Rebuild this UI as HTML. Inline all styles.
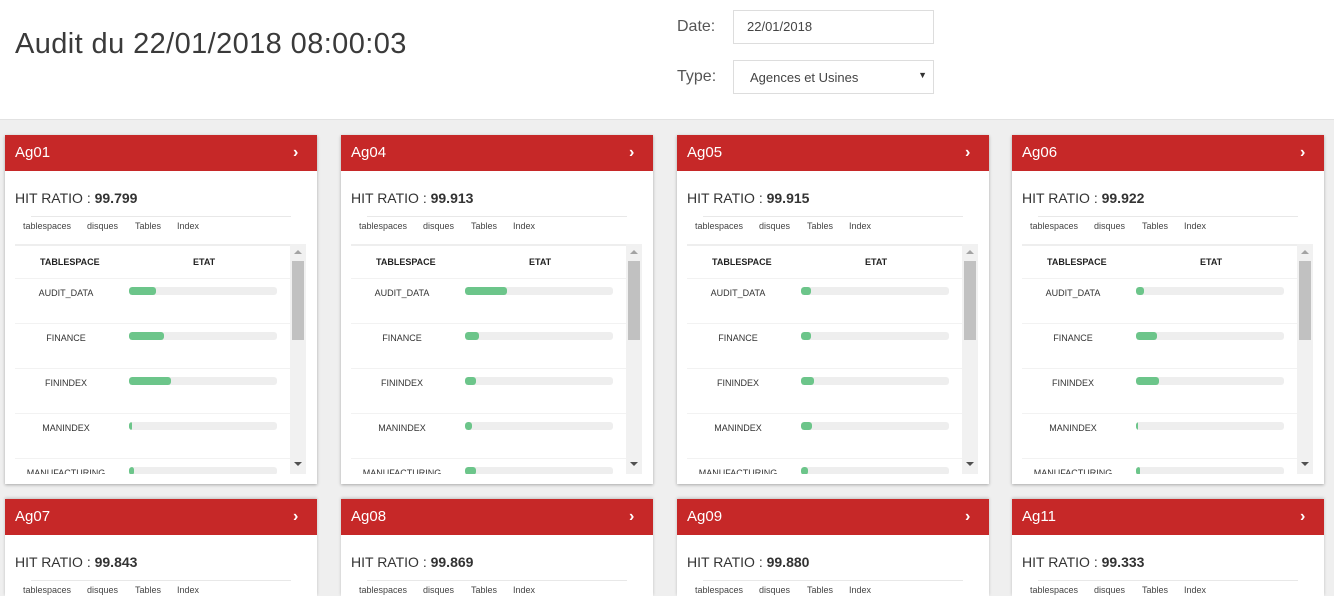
<!DOCTYPE html>
<html style="width:1334px;height:596px;overflow:hidden"><head><meta charset="utf-8"><style>
*{box-sizing:border-box;margin:0;padding:0}
body{width:1334px;height:596px;overflow:hidden;background:#efefef;font-family:"Liberation Sans",Arial,sans-serif;color:#333;position:relative}
.top{position:absolute;left:0;top:0;width:1334px;height:120px;background:#fff;border-bottom:1px solid #e2e2e2}
.title{position:absolute;left:15px;top:28px;font-size:29px;color:#3a3a3a;letter-spacing:0.4px}
.lbl{position:absolute;font-size:16px;color:#555}
.inp{position:absolute;left:733px;width:201px;border:1px solid #ddd;background:#fff;font-size:13px;color:#444}
.card{position:absolute;width:312px;height:349px;background:#fff;box-shadow:0 1px 3px rgba(0,0,0,.3);overflow:hidden}
.card.b{height:97px;box-shadow:0 -1px 3px rgba(0,0,0,.2)}
.hd{position:absolute;left:0;top:0;width:312px;height:36px;background:#c62828;color:#fff;font-size:15px;line-height:36px;padding-left:10px}
.hd b{position:absolute;left:288px;top:0;font-size:16px}
.hr{position:absolute;left:10px;top:55px;font-size:14px;color:#333}
.hr strong{font-weight:bold}
.ln{position:absolute;left:26px;top:81px;width:260px;height:1px;background:#e8e8e8}
.tab{position:absolute;top:86px;font-size:9px;color:#444}
.tbl{position:absolute;left:10px;top:109px;width:275px;height:230px;border-top:2px solid #eee;overflow:hidden}
.th{position:absolute;top:11px;font-size:9px;font-weight:bold;color:#222}
.row{position:absolute;left:0;width:275px;height:45px;border-top:1px solid #f2f2f2}
.nm{position:absolute;left:0;width:102px;text-align:center;top:9px;font-size:9px;color:#333}
.bar{position:absolute;left:114px;top:8px;width:148px;height:8px;background:#eee;border-radius:3px;overflow:hidden}
.bar i{display:block;height:8px;background:#6cc58a;border-radius:3px}
.sb{position:absolute;left:285px;top:109px;width:16px;height:230px;background:#f1f1f1}
.sb .th2{position:absolute;left:2px;top:17px;width:12px;height:79px;background:#c1c1c1}
.up{position:absolute;left:4px;top:6px;width:0;height:0;border-left:4px solid transparent;border-right:4px solid transparent;border-bottom:4px solid #a3a3a3}
.dn{position:absolute;left:4px;top:218px;width:0;height:0;border-left:4px solid transparent;border-right:4px solid transparent;border-top:4px solid #505050}
</style></head><body>
<div class="top">
<div class="title">Audit du 22/01/2018 08:00:03</div>
<div class="lbl" style="left:677px;top:18px">Date:</div>
<div class="inp" style="top:10px;height:34px;padding:8px 0 0 13px">22/01/2018</div>
<div class="lbl" style="left:677px;top:68px">Type:</div>
<div class="inp" style="top:60px;height:34px;padding:9px 0 0 16px">Agences et Usines<span style="position:absolute;right:6px;top:9px;font-size:9px;color:#333">▼</span></div>
</div>

<div class="card" style="left:5px;top:135px"><div class="hd">Ag01<b>›</b></div><div class="hr">HIT RATIO : <strong>99.799</strong></div><div class="ln"></div><div class="tab" style="left:18px">tablespaces</div><div class="tab" style="left:82px">disques</div><div class="tab" style="left:130px">Tables</div><div class="tab" style="left:172px">Index</div>
<div class="tbl"><div class="th" style="left:25px">TABLESPACE</div><div class="th" style="left:178px">ETAT</div>
<div class="row" style="top:32px"><div class="nm">AUDIT_DATA</div><div class="bar"><i style="width:27px"></i></div></div>
<div class="row" style="top:77px"><div class="nm">FINANCE</div><div class="bar"><i style="width:35px"></i></div></div>
<div class="row" style="top:122px"><div class="nm">FININDEX</div><div class="bar"><i style="width:42px"></i></div></div>
<div class="row" style="top:167px"><div class="nm">MANINDEX</div><div class="bar"><i style="width:3px"></i></div></div>
<div class="row" style="top:212px"><div class="nm">MANUFACTURING</div><div class="bar"><i style="width:5px"></i></div></div>
</div><div class="sb"><div class="up"></div><div class="th2"></div><div class="dn"></div></div></div>

<div class="card" style="left:341px;top:135px"><div class="hd">Ag04<b>›</b></div><div class="hr">HIT RATIO : <strong>99.913</strong></div><div class="ln"></div><div class="tab" style="left:18px">tablespaces</div><div class="tab" style="left:82px">disques</div><div class="tab" style="left:130px">Tables</div><div class="tab" style="left:172px">Index</div>
<div class="tbl"><div class="th" style="left:25px">TABLESPACE</div><div class="th" style="left:178px">ETAT</div>
<div class="row" style="top:32px"><div class="nm">AUDIT_DATA</div><div class="bar"><i style="width:42px"></i></div></div>
<div class="row" style="top:77px"><div class="nm">FINANCE</div><div class="bar"><i style="width:14px"></i></div></div>
<div class="row" style="top:122px"><div class="nm">FININDEX</div><div class="bar"><i style="width:11px"></i></div></div>
<div class="row" style="top:167px"><div class="nm">MANINDEX</div><div class="bar"><i style="width:7px"></i></div></div>
<div class="row" style="top:212px"><div class="nm">MANUFACTURING</div><div class="bar"><i style="width:11px"></i></div></div>
</div><div class="sb"><div class="up"></div><div class="th2"></div><div class="dn"></div></div></div>

<div class="card" style="left:677px;top:135px"><div class="hd">Ag05<b>›</b></div><div class="hr">HIT RATIO : <strong>99.915</strong></div><div class="ln"></div><div class="tab" style="left:18px">tablespaces</div><div class="tab" style="left:82px">disques</div><div class="tab" style="left:130px">Tables</div><div class="tab" style="left:172px">Index</div>
<div class="tbl"><div class="th" style="left:25px">TABLESPACE</div><div class="th" style="left:178px">ETAT</div>
<div class="row" style="top:32px"><div class="nm">AUDIT_DATA</div><div class="bar"><i style="width:10px"></i></div></div>
<div class="row" style="top:77px"><div class="nm">FINANCE</div><div class="bar"><i style="width:10px"></i></div></div>
<div class="row" style="top:122px"><div class="nm">FININDEX</div><div class="bar"><i style="width:13px"></i></div></div>
<div class="row" style="top:167px"><div class="nm">MANINDEX</div><div class="bar"><i style="width:11px"></i></div></div>
<div class="row" style="top:212px"><div class="nm">MANUFACTURING</div><div class="bar"><i style="width:7px"></i></div></div>
</div><div class="sb"><div class="up"></div><div class="th2"></div><div class="dn"></div></div></div>

<div class="card" style="left:1012px;top:135px"><div class="hd">Ag06<b>›</b></div><div class="hr">HIT RATIO : <strong>99.922</strong></div><div class="ln"></div><div class="tab" style="left:18px">tablespaces</div><div class="tab" style="left:82px">disques</div><div class="tab" style="left:130px">Tables</div><div class="tab" style="left:172px">Index</div>
<div class="tbl"><div class="th" style="left:25px">TABLESPACE</div><div class="th" style="left:178px">ETAT</div>
<div class="row" style="top:32px"><div class="nm">AUDIT_DATA</div><div class="bar"><i style="width:8px"></i></div></div>
<div class="row" style="top:77px"><div class="nm">FINANCE</div><div class="bar"><i style="width:21px"></i></div></div>
<div class="row" style="top:122px"><div class="nm">FININDEX</div><div class="bar"><i style="width:23px"></i></div></div>
<div class="row" style="top:167px"><div class="nm">MANINDEX</div><div class="bar"><i style="width:2px"></i></div></div>
<div class="row" style="top:212px"><div class="nm">MANUFACTURING</div><div class="bar"><i style="width:4px"></i></div></div>
</div><div class="sb"><div class="up"></div><div class="th2"></div><div class="dn"></div></div></div>

<div class="card b" style="left:5px;top:499px"><div class="hd">Ag07<b>›</b></div><div class="hr">HIT RATIO : <strong>99.843</strong></div><div class="ln"></div><div class="tab" style="left:18px">tablespaces</div><div class="tab" style="left:82px">disques</div><div class="tab" style="left:130px">Tables</div><div class="tab" style="left:172px">Index</div></div>
<div class="card b" style="left:341px;top:499px"><div class="hd">Ag08<b>›</b></div><div class="hr">HIT RATIO : <strong>99.869</strong></div><div class="ln"></div><div class="tab" style="left:18px">tablespaces</div><div class="tab" style="left:82px">disques</div><div class="tab" style="left:130px">Tables</div><div class="tab" style="left:172px">Index</div></div>
<div class="card b" style="left:677px;top:499px"><div class="hd">Ag09<b>›</b></div><div class="hr">HIT RATIO : <strong>99.880</strong></div><div class="ln"></div><div class="tab" style="left:18px">tablespaces</div><div class="tab" style="left:82px">disques</div><div class="tab" style="left:130px">Tables</div><div class="tab" style="left:172px">Index</div></div>
<div class="card b" style="left:1012px;top:499px"><div class="hd">Ag11<b>›</b></div><div class="hr">HIT RATIO : <strong>99.333</strong></div><div class="ln"></div><div class="tab" style="left:18px">tablespaces</div><div class="tab" style="left:82px">disques</div><div class="tab" style="left:130px">Tables</div><div class="tab" style="left:172px">Index</div></div>
</body></html>
